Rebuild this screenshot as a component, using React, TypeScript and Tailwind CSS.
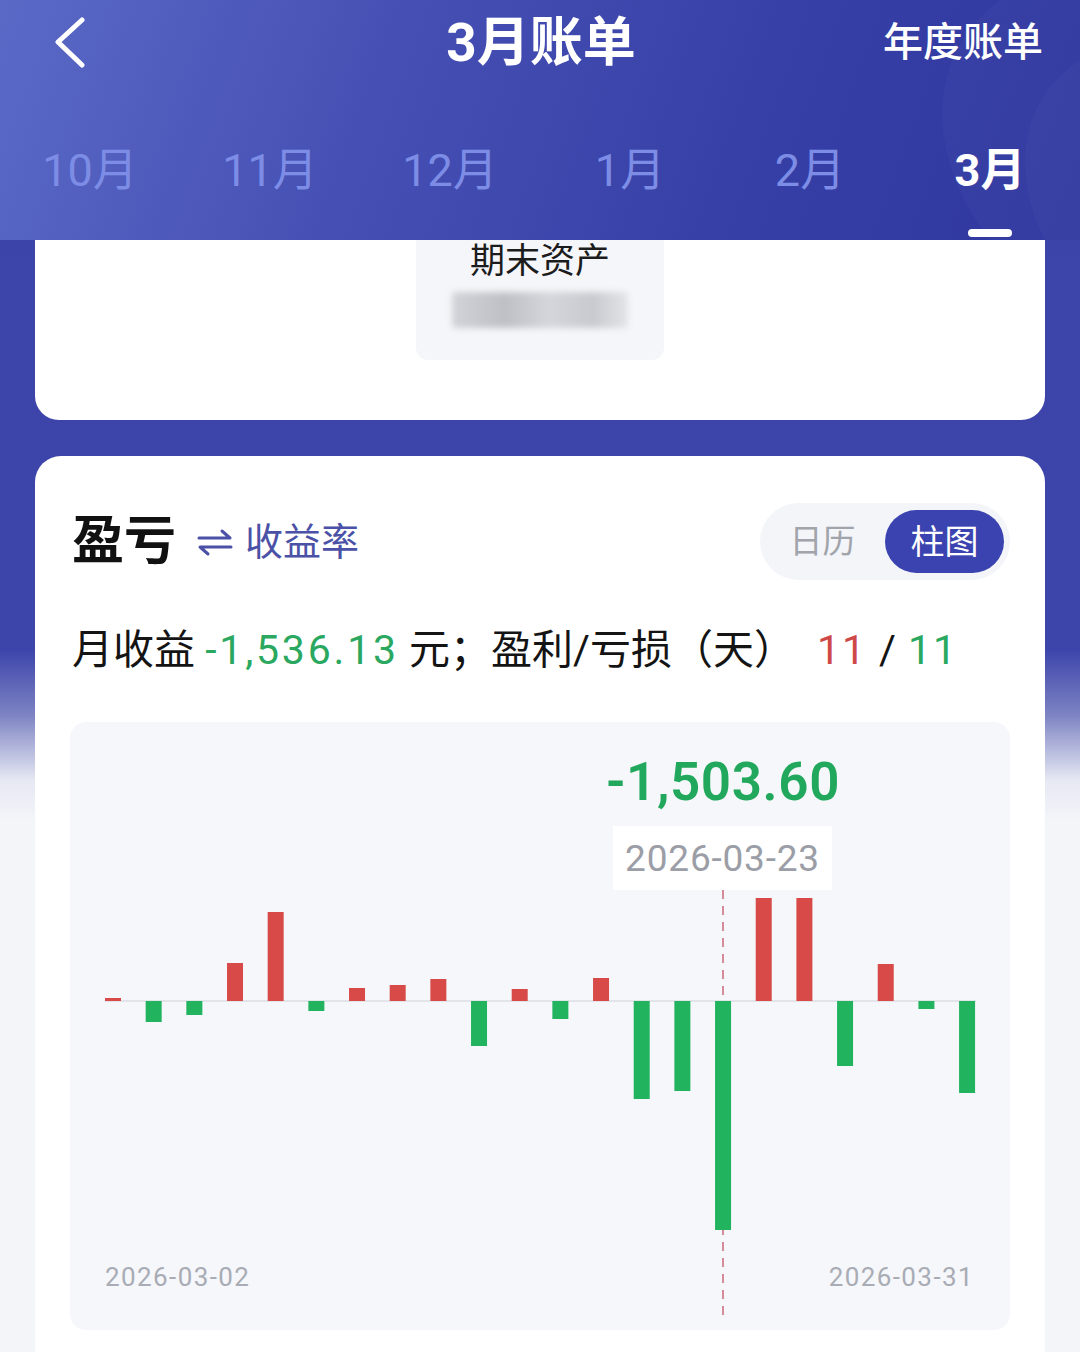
import React from "react";

const bars: [number, number][] = [
  [1, 3], [-1, 21], [-1, 14], [1, 38], [1, 89], [-1, 10], [1, 13], [1, 16], [1, 22], [-1, 45], [1, 12],
  [-1, 18], [1, 23], [-1, 98], [-1, 90], [-1, 229], [1, 103], [1, 103], [-1, 65], [1, 37], [-1, 8], [-1, 92],
];

const months = ["10月", "11月", "12月", "1月", "2月", "3月"];

function Chart() {
  const base = 279;
  return (
    <svg className="absolute inset-0" width="940" height="608" viewBox="0 0 940 608">
      <line x1="35" y1={base} x2="906" y2={base} stroke="#dcdde4" strokeWidth="1.5" />
      <line x1="653" y1="168" x2="653" y2="600" stroke="#c76a78" strokeWidth="1.5" strokeDasharray="9 7" />
      {bars.map(([s, h], i) => {
        const cx = 43 + i * 40.67;
        const y = s > 0 ? base - h : base;
        return (
          <rect key={i} x={cx - 8} y={y} width="16" height={h} fill={s > 0 ? "#d84a47" : "#22b35e"} />
        );
      })}
      <text x="35" y="564" fontSize="26" letterSpacing="1.4" fill="#a9acb4" fontFamily="Roboto, sans-serif">2026-03-02</text>
      <text x="904" y="564" fontSize="26" letterSpacing="1.4" fill="#a9acb4" textAnchor="end" fontFamily="Roboto, sans-serif">2026-03-31</text>
    </svg>
  );
}

export default function App() {
  return (
    <div className="relative w-[1080px] h-[1352px] overflow-hidden bg-[linear-gradient(180deg,#3c44aa_0px,#3d45ab_650px,#7d83c3_715px,#e6e8f3_780px,#f4f5f9_820px)] font-['Roboto','Noto_Sans_CJK_SC',sans-serif]">
      {/* Header */}
      <div className="relative h-[240px] bg-[linear-gradient(110deg,#5a69c6_0%,#4650b4_35%,#363fa5_70%,#3038a0_100%)] overflow-hidden">
        <svg className="absolute inset-0" width="1080" height="240" viewBox="0 0 1080 240">
          <path d="M1080 0 L1000 0 C930 50 920 150 990 240 L1080 240 Z" fill="#ffffff" opacity="0.025" />
          <path d="M1080 60 C1020 100 1010 170 1045 240 L1080 240 Z" fill="#ffffff" opacity="0.025" />
        </svg>
        <div className="relative flex h-[86px] items-center">
          <div className="flex-1 pl-[55px]">
            <svg width="32" height="52" viewBox="0 0 32 52">
              <polyline points="27,3 3,25 27,48" fill="none" stroke="#ffffff" strokeWidth="5" strokeLinecap="round" strokeLinejoin="round" />
            </svg>
          </div>
          <div className="mr-[16px] text-[53px] font-bold text-white leading-none">3月账单</div>
          <div className="flex-1 flex justify-end pr-[37px] text-[40px] font-medium text-white leading-none">年度账单</div>
        </div>
        <div className="relative mt-[44px] grid grid-cols-6 h-[80px] items-center">
          {months.map((m, i) => (
            <div
              key={m}
              className={
                i === 5
                  ? "text-center text-[45px] font-bold text-white leading-none"
                  : "text-center text-[45px] text-[#7d8de6] leading-none"
              }
            >
              {m}
            </div>
          ))}
        </div>
        <div className="relative mt-[19px] grid grid-cols-6">
          <div className="col-start-6 flex justify-center">
            <div className="h-[8px] w-[44px] rounded-full bg-white" />
          </div>
        </div>
      </div>

      {/* Card 1 */}
      <div className="mx-[35px] h-[180px] rounded-b-[24px] bg-white flex justify-center">
        <div className="w-[248px] h-[120px] rounded-b-[12px] bg-[#f5f6fa] flex flex-col items-center">
          <div className="pt-[2px] text-[35px] leading-[40px] text-[#1c1c1c]">期末资产</div>
          <div className="mt-[10px] h-[36px] w-[176px] rounded-[4px] bg-[linear-gradient(90deg,#d2d3d8,#bfc0c6_30%,#d5d6db_55%,#c9cacf_80%,#e3e4e8)] blur-[3px]" />
        </div>
      </div>

      {/* Card 2 */}
      <div className="mx-[35px] mt-[36px] h-[920px] rounded-t-[26px] bg-white px-[35px] pt-[47px]">
        <div className="flex h-[77px] items-center justify-between">
          <div className="flex items-center pl-[2px]">
            <span className="text-[52px] font-bold text-[#111] leading-none">盈亏</span>
            <svg className="ml-[21px]" width="36" height="30" viewBox="0 0 36 30">
              <path d="M2 11 H33 L25 4" fill="none" stroke="#4b51a6" strokeWidth="3" strokeLinecap="round" strokeLinejoin="round" />
              <path d="M34 20 H3 L11 27" fill="none" stroke="#4b51a6" strokeWidth="3" strokeLinecap="round" strokeLinejoin="round" />
            </svg>
            <span className="ml-[12px] text-[38px] text-[#4b51a6] leading-none">收益率</span>
          </div>
          <div className="flex h-[77px] w-[250px] items-center rounded-full bg-[#f3f5f9]">
            <div className="flex-1 text-center text-[33px] text-[#a1a4ab] leading-none">日历</div>
            <div className="mr-[6px] flex h-[63px] w-[119px] items-center justify-center rounded-full bg-[#3b43b0] text-[34px] text-white leading-none">柱图</div>
          </div>
        </div>

        <div className="mt-[42px] pl-[2px] text-[41px] leading-[56px] text-[#141414] whitespace-nowrap">
          月收益 <span className="tracking-[2.8px] text-[#2aa860]">-1,536.13</span> 元；盈利/亏损（天）
          <span className="ml-[22px] tracking-[2px] text-[#cf4848]">11</span>
          <span className="mx-[12px]">/</span>
          <span className="tracking-[2px] text-[#2aa860]">11</span>
        </div>

        <div className="relative mt-[44px] h-[608px] rounded-[16px] bg-[#f5f7fb]">
          <Chart />
          <div className="absolute left-[653px] top-[34px] -translate-x-1/2 text-[53px] font-semibold tracking-[0.6px] leading-none text-[#22a85c] whitespace-nowrap">
            -1,503.60
          </div>
          <div className="absolute left-[543px] top-[104px] flex h-[64px] w-[219px] items-center justify-center bg-white text-[37px] tracking-[0.8px] text-[#9b9ea6] leading-none">
            2026-03-23
          </div>
        </div>
      </div>
    </div>
  );
}
